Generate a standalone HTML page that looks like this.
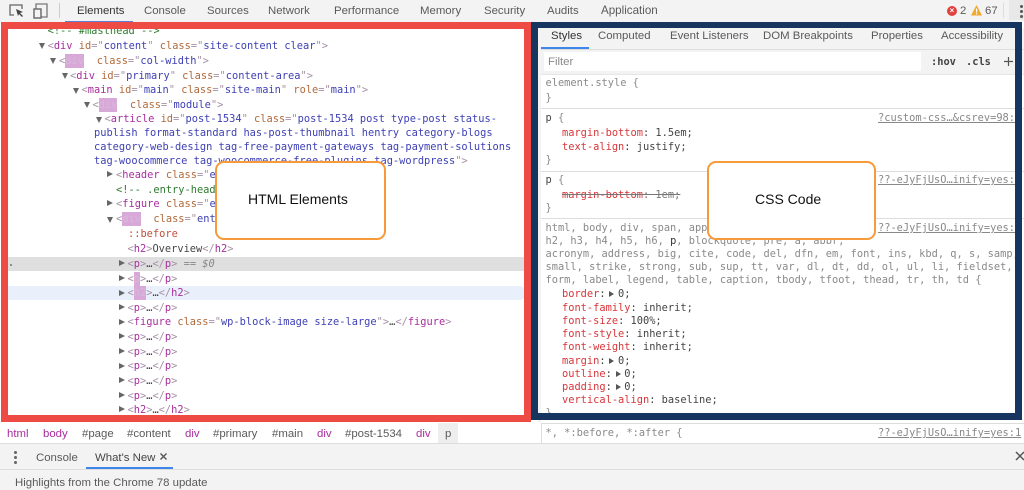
<!DOCTYPE html>
<html><head><meta charset="utf-8">
<style>
html,body{margin:0;padding:0;background:#fff}
#p{position:relative;width:1024px;height:490px;overflow:hidden;background:#fff;font-family:"Liberation Sans",sans-serif;font-size:11.4px;color:#5a5a5a;filter:blur(.3px)}
.a{position:absolute}
.t{position:absolute;white-space:pre;line-height:14px;height:14px}
.m{font-family:"DejaVu Sans Mono",monospace;font-size:10.35px;color:#444}
.g{color:#a590a5}.n{color:#a82d9e}.k{color:#b06a3c}.v{color:#3f41b5}.c{color:#2f7a30}
.h{background:#d8a8d8;color:#d8b8d8;padding:1px 0}
.s{color:#8a8a8a}
.r{color:#d8363a}
.u{color:#888;text-decoration:underline}
.ar,.ad{position:absolute;width:0;height:0}
.ar{border-left:6px solid #666;border-top:3.5px solid transparent;border-bottom:3.5px solid transparent}
.ad{border-top:6px solid #666;border-left:3.5px solid transparent;border-right:3.5px solid transparent}
.sm{position:absolute;width:0;height:0;border-left:5px solid #555;border-top:3px solid transparent;border-bottom:3px solid transparent}
.call{position:absolute;top:161px;height:75px;background:#fff;border:2px solid #f79a3a;border-radius:9px;z-index:5}
.ct{position:absolute;top:191px;z-index:6;color:#111;font-size:14px;line-height:16px;white-space:pre}
</style></head><body><div id="p">

<!-- top bar -->
<div class="a" style="left:0;top:0;width:1024px;height:22px;background:#f3f3f3"></div>
<svg class="a" style="left:8px;top:2px" width="44" height="17" viewBox="0 0 44 17" fill="none">
<path d="M6 13H2V3h12v4" stroke="#666" stroke-width="1.3"/>
<path d="M8 7l7 3-3 1 3 3-1 1-3-3-1 2z" fill="#444"/>
<path d="M28 7V2h11v13h-6" stroke="#777" stroke-width="1.3"/>
<rect x="26" y="7" width="7" height="9" fill="none" stroke="#666" stroke-width="1.4"/>
</svg>
<div class="a" style="left:59px;top:3px;width:1px;height:15px;background:#ccc"></div>
<span class="t" style="left:77px;top:4px;color:#333">Elements</span>
<span class="t" style="left:144px;top:4px">Console</span>
<span class="t" style="left:207px;top:4px">Sources</span>
<span class="t" style="left:268px;top:4px">Network</span>
<span class="t" style="left:334px;top:4px">Performance</span>
<span class="t" style="left:420px;top:4px">Memory</span>
<span class="t" style="left:484px;top:4px">Security</span>
<span class="t" style="left:547px;top:4px">Audits</span>
<span class="t" style="left:601px;top:4px;font-size:11.6px">Application</span>
<div class="a" style="left:65px;top:21px;width:68px;height:1px;background:#5a80d8"></div>

<div class="a" style="left:947px;top:6px;width:10px;height:10px;border-radius:50%;background:#e2403f"></div>
<span class="t" style="left:948px;top:4px;width:8px;text-align:center;color:#fff;font-size:8px;font-weight:bold">×</span>
<span class="t" style="left:960px;top:4px">2</span>
<svg class="a" style="left:971px;top:5px" width="11" height="11" viewBox="0 0 11 11"><path d="M5.5 0L11 10.5H0z" fill="#f2a82c"/><rect x="5" y="3.5" width="1.2" height="4" fill="#fff"/><rect x="5" y="8.2" width="1.2" height="1.2" fill="#fff"/></svg>
<span class="t" style="left:985px;top:4px">67</span>
<div class="a" style="left:1003px;top:3px;width:1px;height:15px;background:#ddd"></div>
<div class="a" style="left:1009px;top:0;width:15px;height:20px;background:#e8e8e8"></div>
<div class="a" style="left:1020px;top:5px;width:3px;height:3px;border-radius:50%;background:#555;box-shadow:0 5px 0 #555,0 10px 0 #555"></div>

<!-- left pane rows -->
<div class="a" style="left:8px;top:257px;width:517px;height:14px;background:#dfdfdf"></div>
<div class="a" style="left:8px;top:286px;width:517px;height:14px;background:#e9f0fb;border-radius:0 5px 5px 0"></div>
<div class="a" style="left:10px;top:264px;width:2px;height:2px;background:#777;border-radius:50%"></div>

<span class="t m" style="left:47.6px;top:24px"><span class="c">&lt;!-- #masthead --&gt;</span></span>
<i class="ad" style="left:38.5px;top:43px"></i>
<span class="t m" style="left:47.6px;top:39px"><span class="g">&lt;</span><span class="n">div</span> <span class="k">id</span><span class="g">="</span><span class="v">content</span><span class="g">"</span> <span class="k">class</span><span class="g">="</span><span class="v">site-content clear</span><span class="g">"&gt;</span></span>
<i class="ad" style="left:50px;top:58px"></i>
<span class="t m" style="left:59px;top:54px"><span class="g">&lt;</span><span class="h" style="padding-right:.4px">div</span>  <span class="k">class</span><span class="g">="</span><span class="v">col-width</span><span class="g">"&gt;</span></span>
<i class="ad" style="left:62px;top:73px"></i>
<span class="t m" style="left:70px;top:69px"><span class="g">&lt;</span><span class="n">div</span> <span class="k">id</span><span class="g">="</span><span class="v">primary</span><span class="g">"</span> <span class="k">class</span><span class="g">="</span><span class="v">content-area</span><span class="g">"&gt;</span></span>
<i class="ad" style="left:73px;top:88px"></i>
<span class="t m" style="left:81.5px;top:83px"><span class="g">&lt;</span><span class="n">main</span> <span class="k">id</span><span class="g">="</span><span class="v">main</span><span class="g">"</span> <span class="k">class</span><span class="g">="</span><span class="v">site-main</span><span class="g">"</span> <span class="k">role</span><span class="g">="</span><span class="v">main</span><span class="g">"&gt;</span></span>
<i class="ad" style="left:84px;top:102px"></i>
<span class="t m" style="left:92.5px;top:98px"><span class="g">&lt;</span><span class="h">div</span>  <span class="k">class</span><span class="g">="</span><span class="v">module</span><span class="g">"&gt;</span></span>
<i class="ad" style="left:96px;top:117px"></i>
<span class="t m" style="left:104.5px;top:112px"><span class="g">&lt;</span><span class="n">article</span> <span class="k">id</span><span class="g">="</span><span class="v">post-1534</span><span class="g">"</span> <span class="k">class</span><span class="g">="</span><span class="v">post-1534 post type-post status-</span></span>
<span class="t m v" style="left:94px;top:126px;color:#3f41b5">publish format-standard has-post-thumbnail hentry category-blogs</span>
<span class="t m" style="left:94px;top:140px;color:#3f41b5">category-web-design tag-free-payment-gateways tag-payment-solutions</span>
<span class="t m" style="left:94px;top:154px;color:#3f41b5">tag-woocommerce tag-woocommerce-free-plugins tag-wordpress<span class="g">"&gt;</span></span>

<i class="ar" style="left:107px;top:171px"></i>
<span class="t m" style="left:116px;top:168px"><span class="g">&lt;</span><span class="n">header</span> <span class="k">class</span><span class="g">="</span><span class="v">entry-header</span></span>
<span class="t m c" style="left:116px;top:183px;color:#2f7a30">&lt;!-- .entry-header --&gt;</span>
<i class="ar" style="left:107px;top:200px"></i>
<span class="t m" style="left:116px;top:197px"><span class="g">&lt;</span><span class="n">figure</span> <span class="k">class</span><span class="g">="</span><span class="v">entry</span></span>
<i class="ad" style="left:107px;top:217px"></i>
<span class="t m" style="left:116px;top:212px"><span class="g">&lt;</span><span class="h">div</span>  <span class="k">class</span><span class="g">="</span><span class="v">entry-content</span></span>
<span class="t m" style="left:128px;top:227px;color:#c0503c">::before</span>
<span class="t m" style="left:127.5px;top:242px"><span class="g">&lt;</span><span class="n">h2</span><span class="g">&gt;</span>Overview<span class="g">&lt;/</span><span class="n">h2</span><span class="g">&gt;</span></span>
<i class="ar" style="left:119px;top:260px"></i>
<span class="t m" style="left:127.5px;top:257px"><span class="g">&lt;</span><span class="n">p</span><span class="g">&gt;</span>…<span class="g">&lt;/</span><span class="n">p</span><span class="g">&gt;</span> <span style="color:#888">== <i>$0</i></span></span>
<i class="ar" style="left:119px;top:275px"></i>
<span class="t m" style="left:127.5px;top:272px"><span class="g">&lt;</span><span class="h">p</span><span class="g">&gt;</span>…<span class="g">&lt;/</span><span class="n">p</span><span class="g">&gt;</span></span>
<i class="ar" style="left:119px;top:290px"></i>
<span class="t m" style="left:127.5px;top:286px"><span class="g">&lt;</span><span class="h">h2</span><span class="g">&gt;</span>…<span class="g">&lt;/</span><span class="n">h2</span><span class="g">&gt;</span></span>
<i class="ar" style="left:119px;top:304px"></i>
<span class="t m" style="left:127.5px;top:301px"><span class="g">&lt;</span><span class="n">p</span><span class="g">&gt;</span>…<span class="g">&lt;/</span><span class="n">p</span><span class="g">&gt;</span></span>
<i class="ar" style="left:119px;top:319px"></i>
<span class="t m" style="left:127.5px;top:315px"><span class="g">&lt;</span><span class="n">figure</span> <span class="k">class</span><span class="g">="</span><span class="v">wp-block-image size-large</span><span class="g">"&gt;</span>…<span class="g">&lt;/</span><span class="n">figure</span><span class="g">&gt;</span></span>
<i class="ar" style="left:119px;top:333px"></i>
<span class="t m" style="left:127.5px;top:330px"><span class="g">&lt;</span><span class="n">p</span><span class="g">&gt;</span>…<span class="g">&lt;/</span><span class="n">p</span><span class="g">&gt;</span></span>
<i class="ar" style="left:119px;top:348px"></i>
<span class="t m" style="left:127.5px;top:345px"><span class="g">&lt;</span><span class="n">p</span><span class="g">&gt;</span>…<span class="g">&lt;/</span><span class="n">p</span><span class="g">&gt;</span></span>
<i class="ar" style="left:119px;top:363px"></i>
<span class="t m" style="left:127.5px;top:359px"><span class="g">&lt;</span><span class="n">p</span><span class="g">&gt;</span>…<span class="g">&lt;/</span><span class="n">p</span><span class="g">&gt;</span></span>
<i class="ar" style="left:119px;top:377px"></i>
<span class="t m" style="left:127.5px;top:374px"><span class="g">&lt;</span><span class="n">p</span><span class="g">&gt;</span>…<span class="g">&lt;/</span><span class="n">p</span><span class="g">&gt;</span></span>
<i class="ar" style="left:119px;top:392px"></i>
<span class="t m" style="left:127.5px;top:389px"><span class="g">&lt;</span><span class="n">p</span><span class="g">&gt;</span>…<span class="g">&lt;/</span><span class="n">p</span><span class="g">&gt;</span></span>
<i class="ar" style="left:119px;top:406px"></i>
<span class="t m" style="left:127.5px;top:403px"><span class="g">&lt;</span><span class="n">h2</span><span class="g">&gt;</span>…<span class="g">&lt;/</span><span class="n">h2</span><span class="g">&gt;</span></span>

<!-- right pane -->
<div class="a" style="left:538px;top:28px;width:3px;height:395px;background:#f3f3f3"></div>
<div class="a" style="left:541px;top:28px;width:483px;height:22px;background:#f3f3f3;border-bottom:1px solid #ddd;box-sizing:border-box"></div>
<span class="t" style="left:551px;top:29px;color:#333">Styles</span>
<span class="t" style="left:598px;top:29px">Computed</span>
<span class="t" style="left:670px;top:29px">Event Listeners</span>
<span class="t" style="left:763px;top:29px">DOM Breakpoints</span>
<span class="t" style="left:871px;top:29px">Properties</span>
<span class="t" style="left:941px;top:29px">Accessibility</span>
<div class="a" style="left:541px;top:47px;width:48px;height:2px;background:#3d86ea"></div>
<div class="a" style="left:541px;top:50px;width:483px;height:24px;background:#f3f3f3"></div>
<div class="a" style="left:544px;top:52px;width:377px;height:19px;background:#fff"></div>
<span class="t" style="left:548px;top:55px;color:#888">Filter</span>
<span class="t m" style="left:931px;top:55px;color:#444;font-weight:bold">:hov</span>
<span class="t m" style="left:966px;top:55px;color:#444;font-weight:bold">.cls</span>
<svg class="a" style="left:1003px;top:56px" width="11" height="11"><path d="M5.5 1v9M1 5.500h9" stroke="#555" stroke-width="1.2"/></svg>
<div class="a" style="left:541px;top:74px;width:483px;height:1px;background:#e6e6e6"></div>

<span class="t m s" style="left:545.500px;top:76px">element.style {</span>
<span class="t m s" style="left:545.500px;top:91px">}</span>
<div class="a" style="left:541px;top:108px;width:483px;height:1px;background:#ddd"></div>
<span class="t m" style="left:545.500px;top:111px">p <span class="s">{</span></span>
<span class="t m" style="left:562px;top:126px"><span class="r">margin-bottom</span>: 1.5em;</span>
<span class="t m" style="left:562px;top:140px"><span class="r">text-align</span>: justify;</span>
<span class="t m s" style="left:545.500px;top:153px">}</span>
<span class="t m u" style="left:878px;top:111px">?custom-css…&amp;csrev=98:</span>
<div class="a" style="left:541px;top:171px;width:483px;height:1px;background:#ddd"></div>
<span class="t m" style="left:545.500px;top:173px">p <span class="s">{</span></span>
<span class="t m" style="left:562px;top:188px;text-decoration:line-through;color:#777"><span class="r">margin-bottom</span>: 1em;</span>
<span class="t m s" style="left:545.500px;top:201px">}</span>
<span class="t m u" style="left:878px;top:173px">??-eJyFjUsO…inify=yes:</span>
<div class="a" style="left:541px;top:218px;width:483px;height:1px;background:#ddd"></div>
<span class="t m s" style="left:545.500px;top:221px">html, body, div, span, applet, object, iframe, h1,</span>
<span class="t m s" style="left:545.500px;top:234px">h2, h3, h4, h5, h6, <span style="color:#333">p</span>, blockquote, pre, a, abbr,</span>
<span class="t m s" style="left:545.500px;top:247px">acronym, address, big, cite, code, del, dfn, em, font, ins, kbd, q, s, samp,</span>
<span class="t m s" style="left:545.500px;top:260px">small, strike, strong, sub, sup, tt, var, dl, dt, dd, ol, ul, li, fieldset,</span>
<span class="t m s" style="left:545.500px;top:273px">form, label, legend, table, caption, tbody, tfoot, thead, tr, th, td {</span>
<span class="t m u" style="left:878px;top:221px">??-eJyFjUsO…inify=yes:</span>
<span class="t m" style="left:562px;top:287px"><span class="r">border</span>:  0;</span><i class="sm" style="left:609px;top:291px"></i>
<span class="t m" style="left:562px;top:301px"><span class="r">font-family</span>: inherit;</span>
<span class="t m" style="left:562px;top:314px"><span class="r">font-size</span>: 100%;</span>
<span class="t m" style="left:562px;top:327px"><span class="r">font-style</span>: inherit;</span>
<span class="t m" style="left:562px;top:340px"><span class="r">font-weight</span>: inherit;</span>
<span class="t m" style="left:562px;top:354px"><span class="r">margin</span>:  0;</span><i class="sm" style="left:609px;top:358px"></i>
<span class="t m" style="left:562px;top:367px"><span class="r">outline</span>:  0;</span><i class="sm" style="left:616px;top:371px"></i>
<span class="t m" style="left:562px;top:380px"><span class="r">padding</span>:  0;</span><i class="sm" style="left:616px;top:384px"></i>
<span class="t m" style="left:562px;top:393px"><span class="r">vertical-align</span>: baseline;</span>
<span class="t m s" style="left:545.500px;top:406px">}</span>

<!-- breadcrumb -->
<div class="a" style="left:0;top:422px;width:1024px;height:22px;background:#fff"></div>
<div class="a" style="left:438px;top:423px;width:20px;height:20px;background:#eee"></div>
<span class="t n" style="left:7px;top:427px">html</span>
<span class="t n" style="left:43px;top:427px">body</span>
<span class="t" style="left:82px;top:427px">#page</span>
<span class="t" style="left:127px;top:427px">#content</span>
<span class="t n" style="left:185px;top:427px">div</span>
<span class="t" style="left:213px;top:427px">#primary</span>
<span class="t" style="left:272px;top:427px">#main</span>
<span class="t n" style="left:317px;top:427px">div</span>
<span class="t" style="left:345px;top:427px">#post-1534</span>
<span class="t n" style="left:416px;top:427px">div</span>
<span class="t" style="left:445px;top:427px">p</span>
<div class="a" style="left:541px;top:423px;width:483px;height:1px;background:#ddd"></div>
<div class="a" style="left:541px;top:423px;width:1px;height:21px;background:#ddd"></div>
<span class="t m s" style="left:545.500px;top:426px">*, *:before, *:after {</span>
<span class="t m u" style="left:878px;top:426px">??-eJyFjUsO…inify=yes:1</span>

<!-- drawer -->
<div class="a" style="left:0;top:443px;width:1024px;height:47px;background:#f3f3f3;border-top:1px solid #ddd;box-sizing:border-box"></div>
<div class="a" style="left:0;top:469px;width:1024px;height:1px;background:#ddd"></div>
<div class="a" style="left:14px;top:451px;width:3px;height:3px;border-radius:50%;background:#666;box-shadow:0 5px 0 #666,0 10px 0 #666"></div>
<span class="t" style="left:36px;top:451px">Console</span>
<span class="t" style="left:95px;top:451px;color:#444">What's New</span>
<svg class="a" style="left:159px;top:452px" width="9" height="9"><path d="M1.500 1.500l6 6M7.500 1.500l-6 6" stroke="#555" stroke-width="1.400"/></svg>
<div class="a" style="left:86px;top:467px;width:87px;height:2px;background:#3d86ea"></div>
<svg class="a" style="left:1015px;top:451px" width="10" height="10"><path d="M1 1l8 8M9 1l-8 8" stroke="#555" stroke-width="1.500"/></svg>
<span class="t" style="left:15px;top:476px">Highlights from the Chrome 78 update</span>

<!-- frames -->
<div class="a" style="left:1px;top:22px;width:530px;height:400px;box-sizing:border-box;border:7px solid #ee4b45;z-index:4"></div>
<div class="a" style="left:531px;top:22px;width:491px;height:398px;box-sizing:border-box;border:solid #17365f;border-width:6px 7px 7px 7px;z-index:4"></div>

<!-- callouts -->
<div class="call" style="left:215px;width:167px"></div>
<div class="ct" style="left:248px">HTML Elements</div>
<div class="call" style="left:707px;width:165px"></div>
<div class="ct" style="left:755px">CSS Code</div>

</div></body></html>
